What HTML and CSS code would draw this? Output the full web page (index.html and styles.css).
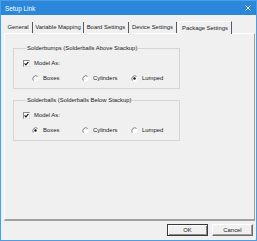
FILE: index.html
```html
<!DOCTYPE html>
<html lang="en">
<head>
    <meta charset="UTF-8">
    <title>Setup Link</title>
    <link rel="stylesheet" href="styles.css">
</head>
<body>
    <div class="window">
        <div class="titlebar">
            <span class="title">Setup Link</span>
            <svg class="close" width="6" height="6" viewBox="0 0 6 6">
                <path d="M0.5 0.5 L5.5 5.5 M5.5 0.5 L0.5 5.5" stroke="#fff" stroke-width="0.9"/>
            </svg>
        </div>

        <div class="content">
            <!-- Tab strip -->
            <div class="tabs">
                <div class="tab tab-general">General</div>
                <div class="tab tab-mapping">Variable Mapping</div>
                <div class="tab tab-board">Board Settings</div>
                <div class="tab tab-device">Device Settings</div>
                <div class="tab tab-package active">Package Settings</div>
            </div>

            <div class="panel">
                <fieldset class="group">
                    <legend>Solderbumps (Solderballs Above Stackup)</legend>
                    <div class="check-row">
                        <svg class="check" width="7" height="7" viewBox="0 0 7 7">
                            <rect x="0.5" y="0.5" width="6" height="6" fill="#fff" stroke="#8a8a8a"/>
                            <path d="M0.5 6.5 L6.5 6.5 L6.5 0.5" fill="none" stroke="#e6e6e6"/>
                            <path d="M1.6 3.4 L2.9 4.8 L5.4 1.8" fill="none" stroke="#111" stroke-width="1.1"/>
                        </svg>
                        <span>Model As:</span>
                    </div>
                    <div class="radio-row">
                        <label class="radio">
                            <svg width="7" height="7" viewBox="0 0 7 7">
                                <circle cx="3.5" cy="3.5" r="3" fill="#fff"/>
                                <path d="M1.4 5.6 A3 3 0 0 1 5.6 1.4" fill="none" stroke="#7a7a7a"/>
                            </svg>
                            <span>Boxes</span>
                        </label>
                        <label class="radio">
                            <svg width="7" height="7" viewBox="0 0 7 7">
                                <circle cx="3.5" cy="3.5" r="3" fill="#fff"/>
                                <path d="M1.4 5.6 A3 3 0 0 1 5.6 1.4" fill="none" stroke="#7a7a7a"/>
                            </svg>
                            <span>Cylinders</span>
                        </label>
                        <label class="radio">
                            <svg width="7" height="7" viewBox="0 0 7 7">
                                <circle cx="3.5" cy="3.5" r="3" fill="#fff"/>
                                <path d="M1.4 5.6 A3 3 0 0 1 5.6 1.4" fill="none" stroke="#7a7a7a"/>
                                <circle cx="3.5" cy="3.5" r="1.2" fill="#111"/>
                            </svg>
                            <span>Lumped</span>
                        </label>
                    </div>
                </fieldset>

                <fieldset class="group">
                    <legend>Solderballs (Solderballs Below Stackup)</legend>
                    <div class="check-row">
                        <svg class="check" width="7" height="7" viewBox="0 0 7 7">
                            <rect x="0.5" y="0.5" width="6" height="6" fill="#fff" stroke="#8a8a8a"/>
                            <path d="M0.5 6.5 L6.5 6.5 L6.5 0.5" fill="none" stroke="#e6e6e6"/>
                            <path d="M1.6 3.4 L2.9 4.8 L5.4 1.8" fill="none" stroke="#111" stroke-width="1.1"/>
                        </svg>
                        <span>Model As:</span>
                    </div>
                    <div class="radio-row">
                        <label class="radio">
                            <svg width="7" height="7" viewBox="0 0 7 7">
                                <circle cx="3.5" cy="3.5" r="3" fill="#fff"/>
                                <path d="M1.4 5.6 A3 3 0 0 1 5.6 1.4" fill="none" stroke="#7a7a7a"/>
                                <circle cx="3.5" cy="3.5" r="1.2" fill="#111"/>
                            </svg>
                            <span>Boxes</span>
                        </label>
                        <label class="radio">
                            <svg width="7" height="7" viewBox="0 0 7 7">
                                <circle cx="3.5" cy="3.5" r="3" fill="#fff"/>
                                <path d="M1.4 5.6 A3 3 0 0 1 5.6 1.4" fill="none" stroke="#7a7a7a"/>
                            </svg>
                            <span>Cylinders</span>
                        </label>
                        <label class="radio">
                            <svg width="7" height="7" viewBox="0 0 7 7">
                                <circle cx="3.5" cy="3.5" r="3" fill="#fff"/>
                                <path d="M1.4 5.6 A3 3 0 0 1 5.6 1.4" fill="none" stroke="#7a7a7a"/>
                            </svg>
                            <span>Lumped</span>
                        </label>
                    </div>
                </fieldset>
            </div>

            <!-- Dialog buttons -->
            <div class="buttons">
                <button class="btn default">OK</button>
                <button class="btn">Cancel</button>
            </div>
        </div>
    </div>
</body>
</html>
```

FILE: styles.css
```css
body {
    margin: 0;
    font-family: "Liberation Sans", Arial, sans-serif;
    font-size: 5.9px;
    color: #1a1a1a;
    background: #f0f0f0;
}
.window {
    width: 257px;
    height: 241px;
    box-sizing: border-box;
    border: 1px solid #4d9de4;
    background: #f0f0f0;
    display: flex;
    flex-direction: column;
}
.titlebar {
    height: 14px;
    background: #2a87da;
    color: #fff;
    display: flex;
    align-items: center;
    justify-content: space-between;
    padding: 0 5px 0 4px;
}
.title {
    font-size: 6.4px;
}
.content {
    flex: 1;
    display: flex;
    flex-direction: column;
    padding: 6px 1px 0 3px;
}
/* Tab strip */
.tabs {
    display: flex;
    height: 12px;
    align-items: flex-end;
}
.tab {
    height: 11px;
    line-height: 11px;
    box-sizing: border-box;
    border-right: 1px solid #5a5a5a;
    text-align: center;
    white-space: nowrap;
}
.tab-general { width: 29px; }
.tab-mapping { width: 51px; }
.tab-board { width: 45px; }
.tab-device { width: 48px; }
.tab.active {
    width: 54px;
    height: 13px;
    line-height: 12px;
    margin-left: 1px;
    margin-bottom: -1px;
    border-top: 1px solid #fff;
    border-left: 1px solid #fff;
    background: #f0f0f0;
    position: relative;
}
.panel {
    height: 188px;
    box-sizing: border-box;
    border-top: 1px solid #fff;
    border-left: 1px solid #fff;
    border-right: 1px solid #a0a0a0;
    border-bottom: 2px solid #a0a0a0;
    padding: 11px 0 0 8px;
    display: flex;
    flex-direction: column;
    gap: 8px;
}
/* Group boxes */
.group {
    width: 167px;
    box-sizing: border-box;
    margin: 0;
    padding: 0 0 6px 9px;
    border: 1px solid #d5d5d5;
}
.group legend {
    padding: 0 1px;
    margin-left: 3px;
    line-height: 7px;
}
.check-row {
    display: flex;
    align-items: center;
    gap: 4px;
    height: 8px;
    margin-top: 7px;
}
.radio-row {
    display: grid;
    grid-template-columns: 50px 49px auto;
    height: 8px;
    margin-top: 7px;
    padding-left: 9px;
}
.radio {
    display: flex;
    align-items: center;
    gap: 4px;
}
/* Dialog buttons */
.buttons {
    display: flex;
    justify-content: flex-end;
    gap: 4px;
    padding: 3px 2px 0 0;
}
.btn {
    width: 41px;
    height: 12px;
    padding: 0;
    font-family: inherit;
    font-size: 5.9px;
    color: #1a1a1a;
    background: #f0f0f0;
    border: 1px solid;
    border-color: #fff #6a6a6a #6a6a6a #fff;
    box-shadow: inset -1px -1px 0 #a0a0a0;
}
.btn.default {
    border-color: #3a3a3a;
    box-shadow: inset 1px 1px 0 #fff, inset -1px -1px 0 #8a8a8a;
}
```
